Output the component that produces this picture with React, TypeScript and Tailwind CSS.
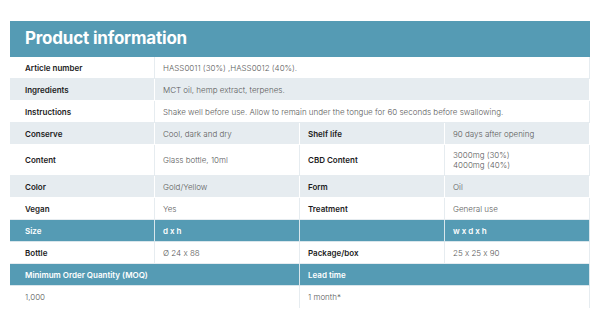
const cell = "flex items-center border-r";

type Row = {
  tone: "white" | "gray" | "teal";
  cells: { text: string | string[]; span?: number; bold?: boolean }[];
  tall?: boolean;
};

const rows: Row[] = [
  { tone: "white", cells: [{ text: "Article number", bold: true }, { text: "HASS0011 (30%) ,HASS0012 (40%).", span: 3 }] },
  { tone: "gray", cells: [{ text: "Ingredients", bold: true }, { text: "MCT oil, hemp extract, terpenes.", span: 3 }] },
  { tone: "white", cells: [{ text: "Instructions", bold: true }, { text: "Shake well before use. Allow to remain under the tongue for 60 seconds before swallowing.", span: 3 }] },
  { tone: "gray", cells: [{ text: "Conserve", bold: true }, { text: "Cool, dark and dry" }, { text: "Shelf life", bold: true }, { text: "90 days after opening" }] },
  { tone: "white", tall: true, cells: [{ text: "Content", bold: true }, { text: "Glass bottle, 10ml" }, { text: "CBD Content", bold: true }, { text: ["3000mg (30%)", "4000mg (40%)"] }] },
  { tone: "gray", cells: [{ text: "Color", bold: true }, { text: "Gold/Yellow" }, { text: "Form", bold: true }, { text: "Oil" }] },
  { tone: "white", cells: [{ text: "Vegan", bold: true }, { text: "Yes" }, { text: "Treatment", bold: true }, { text: "General use" }] },
  { tone: "teal", cells: [{ text: "Size", bold: true }, { text: "d x h", bold: true }, { text: "" }, { text: "w x d x h", bold: true }] },
  { tone: "white", cells: [{ text: "Bottle", bold: true }, { text: "Ø 24 x 88" }, { text: "Package/box", bold: true }, { text: "25 x 25 x 90" }] },
  { tone: "teal", cells: [{ text: "Minimum Order Quantity (MOQ)", bold: true, span: 2 }, { text: "Lead time", bold: true, span: 2 }] },
  { tone: "white", cells: [{ text: "1,000", span: 2 }, { text: "1 month*", span: 2 }] },
];

const tones = {
  white: "bg-white border-[#e6ecf0]",
  gray: "bg-[#e6ecf0] border-white",
  teal: "bg-[#559bb4] border-[#d9e6ec] text-white",
};

const spans: Record<number, string> = { 1: "col-span-1", 2: "col-span-2", 3: "col-span-3" };

export default function App() {
  return (
    <div className="w-[597px] h-[319px] bg-white pt-[21px] px-[10px] [font-feature-settings:'calt'_0]" style={{ fontFamily: "Inter, 'Open Sans', sans-serif" }}>
      <div className="w-[580px]">
        <div className="h-[36px] bg-[#559bb4] flex items-center pl-[15px]">
          <h1 className="text-white text-[17px] font-bold tracking-[-0.2px]">Product information</h1>
        </div>
        <div className="grid grid-cols-[145px_145px_145px_145px]">
          {rows.map((row, r) =>
            row.cells.map((c, i) => {
              const first = i === 0;
              const last = r === rows.length - 1;
              const color =
                row.tone === "teal"
                  ? "text-white"
                  : c.bold
                  ? "text-[#1c1c1c]"
                  : "text-[#5a5a5a]";
              return (
                <div
                  key={r + "-" + i}
                  className={`${cell} ${last ? "" : "border-b"} ${tones[row.tone]} ${spans[c.span ?? 1]} ${row.tall ? "h-[31px]" : "h-[22px]"} ${first ? "pl-[15px]" : "pl-[8px]"} ${color} text-[8px] ${c.bold ? "font-semibold" : "font-light"}`}
                >
                  {Array.isArray(c.text) ? (
                    <div className="leading-[10px]">
                      {c.text.map((t) => (
                        <div key={t}>{t}</div>
                      ))}
                    </div>
                  ) : (
                    <span>{c.text}</span>
                  )}
                </div>
              );
            })
          )}
        </div>
      </div>
    </div>
  );
}
